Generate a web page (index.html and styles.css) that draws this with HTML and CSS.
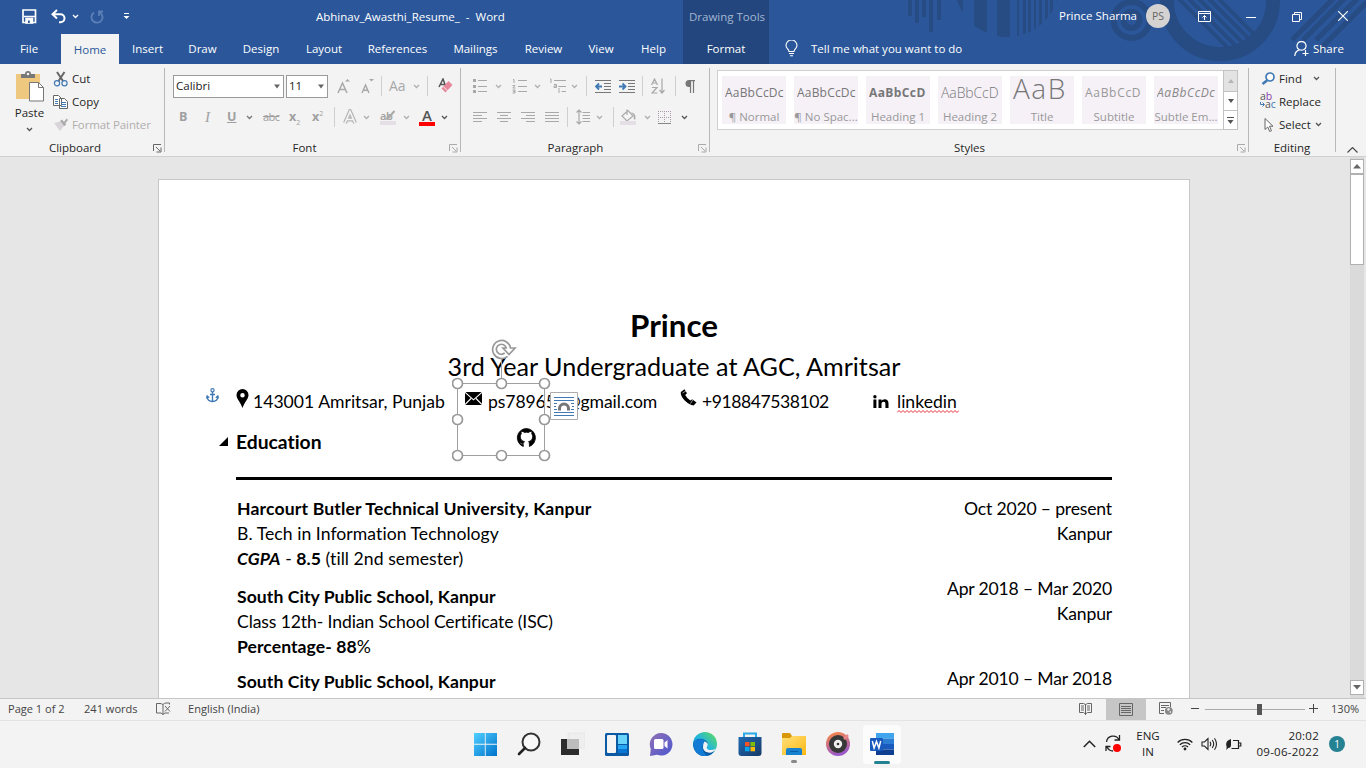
FILE: index.html
```html
<!DOCTYPE html>
<html lang="en">
<head>
<meta charset="utf-8">
<title>Abhinav_Awasthi_Resume_ - Word</title>
<link rel="stylesheet" href="styles.css">
</head>
<body>
<svg class="defs" width="0" height="0">
  <symbol id="chev" viewBox="0 0 7 5"><path d="M1 1l2.500 2.500L6 1" fill="none" stroke="currentColor" stroke-width="1.300"/></symbol>
  <symbol id="launch" viewBox="0 0 9 9"><path d="M.5 7V.5H8M3 3l4 4M8 3.500V8H3.500" fill="none" stroke="currentColor"/></symbol>
  <symbol id="tri" viewBox="0 0 8 5"><path d="M1 .5h6L4 4.500z" fill="currentColor"/></symbol>
</svg>

<header class="top">
  <svg class="decor" width="466" height="64" viewBox="900 0 466 64">
    <defs>
      <clipPath id="c1"><circle cx="1007" cy="-15" r="52"/></clipPath>
      <clipPath id="c2"><circle cx="1220" cy="1" r="47"/></clipPath>
    </defs>
    <g fill="#274b83">
      <path d="M908 0h4v16h-4zM915 0h4v23h-4zM922 0h4v17h-4zM929 0h4v32h-4zM937 0h4v20h-4z"/>
      <path clip-path="url(#c1)" d="M956 0h7v40h-7zM974 0h13v40h-13zM997 0h13v40h-13zM1017 0h2v40h-2zM1023 0h3v40h-3zM1028 0h3v40h-3zM1034 0h2v40h-2zM1039 0h3v40h-3zM1045 0h3v40h-3zM1050 0h3v40h-3zM1056 0h2v40h-2z"/>
    </g>
    <g fill="none" stroke="#274b83">
      <circle cx="1131.500" cy="20" r="18" stroke-width="6"/>
      <circle cx="1131.500" cy="20" r="8" stroke-width="6"/>
      <circle cx="1220" cy="1" r="53" stroke-width="14"/>
      <path clip-path="url(#c2)" stroke-width="4" d="M1160-20l80 80M1170-20l80 80M1180-20l80 80M1190-20l80 80M1200-20l80 80"/>
      <path stroke-width="5" d="M1292 40l45-45M1303 40l45-45M1316 40l45-45M1317 52l55-55"/>
    </g>
  </svg>
  <div class="titlebar">
    <svg width="15" height="15" viewBox="0 0 15 15"><path d="M1 1h12.500v12.500H1z" fill="none" stroke="#fff" stroke-width="1.700"/><path d="M2 7.500h11M4 9.500h6.500V14H4z" fill="#fff" stroke="#fff" stroke-width="1.500"/><path d="M6 11.500h1.800V14H6z" fill="#2b579a"/></svg>
    <svg width="15" height="15" viewBox="0 0 15 15"><path d="M6 1L1.500 5.200L6 9.500M2 5.200h7.500a4 4 0 0 1 0 8H8" fill="none" stroke="#fff" stroke-width="2"/></svg>
    <svg class="w" width="7" height="5"><use href="#chev"/></svg>
    <svg width="14" height="14" viewBox="0 0 14 14"><path d="M4 2.500a5.500 5.500 0 1 0 5-.5M9 6V1.500h4" fill="none" stroke="#5b7fb7" stroke-width="1.800"/></svg>
    <svg width="7" height="7" viewBox="0 0 7 7"><path d="M1 .5h5" stroke="#fff"/><path d="M.5 3h6L3.500 6z" fill="#fff"/></svg>
    <span class="doc-name">Abhinav_Awasthi_Resume_&nbsp; -&nbsp; Word</span>
    <span class="ctx">Drawing Tools</span>
    <span class="user">Prince Sharma</span>
    <span class="avatar">PS</span>
    <svg width="13" height="11" viewBox="0 0 13 11"><path d="M.5.500h12v10H.5zM.5 2.500h12M6.500 9V4.500M4.500 6.500l2-2l2 2" fill="none" stroke="#fff"/></svg>
    <svg width="10" height="10" viewBox="0 0 10 10"><path d="M0 5.500h10" stroke="#fff"/></svg>
    <svg width="10" height="10" viewBox="0 0 10 10"><path d="M.5 2.500h7v7h-7zM2.500 2V.5h7v7H8" fill="none" stroke="#fff"/></svg>
    <svg class="close" width="10" height="10" viewBox="0 0 10 10"><path d="M0 0l10 10M10 0L0 10" stroke="#fff" stroke-width="1.100"/></svg>
  </div>
  <nav class="tabs">
    <span>File</span><span class="on">Home</span><span>Insert</span><span>Draw</span><span>Design</span><span>Layout</span><span>References</span><span>Mailings</span><span>Review</span><span>View</span><span>Help</span><span class="fmt">Format</span>
    <svg class="bulb" width="13" height="17" viewBox="0 0 13 17"><path d="M4 11.500C4 9 1 8.500 1 5.500a5.200 5.200 0 0 1 11 0C12 8.500 9 9 9 11.500zM4 13.500h5M5 15.800h3" fill="none" stroke="#fff" stroke-width="1.100"/></svg>
    <span class="tell">Tell me what you want to do</span>
    <svg width="16" height="16" viewBox="0 0 16 16"><path d="M7.500.600a4.300 4.300 0 0 1 2 8.200M7.500.600a4.300 4.300 0 0 0-2 8.200M5.500 8.800Q1 10 .8 15M5.500 8.800q2 .8 4 0M11.500 9v6M8.500 12.500h6" fill="none" stroke="#fff" stroke-width="1.200"/></svg>
    <span class="share">Share</span>
  </nav>
</header>

<section class="ribbon">
  <div class="group clip">
    <div class="clip-body">
      <div class="paste">
        <svg width="29" height="32" viewBox="0 0 29 32"><path d="M1 4h24v25H1z" fill="#edc87e"/><path d="M6 8V4h4a3 3 0 0 1 6 0h4v4z" fill="#777"/><circle cx="13" cy="4" r="1.300" fill="#f3f3f3"/><path d="M14.500 12.500h9l5 5v13.500h-14z" fill="#fff" stroke="#777"/><path d="M23.500 12.500v5h5" fill="none" stroke="#777"/></svg>
        <span>Paste</span>
        <svg class="g" width="7" height="5"><use href="#chev"/></svg>
      </div>
      <div class="clip-list">
        <div><svg width="16" height="16" viewBox="0 0 16 16"><path d="M4 1l6 9M11.500 1l-6 9" stroke="#666" stroke-width="2"/><circle cx="4" cy="12.200" r="2.600" fill="none" stroke="#4179b5" stroke-width="1.200"/><circle cx="11.500" cy="12.200" r="2.600" fill="none" stroke="#4179b5" stroke-width="1.200"/></svg>Cut</div>
        <div><svg width="16" height="16" viewBox="0 0 16 16"><path d="M.5 1.500h5l3 3v7h-8zM6.500 4.500h5l3 3v7h-8z" fill="#fff" stroke="#666"/><path d="M2 5.500h3M2 7.500h3M2 9.500h3M8 8.500h5M8 10.500h5M8 12.500h5" stroke="#4179b5"/></svg>Copy</div>
        <div class="dis"><svg width="16" height="16" viewBox="0 0 16 16"><path d="M1 6l6-1.500L11 9l-4 5z" fill="#d9d4da"/><path d="M7 4l2-1.500L11 5l2.500-3.500L15 3l-2.500 3L13 8l-2 1z" fill="#aaa"/></svg>Format Painter</div>
      </div>
    </div>
    <div class="lab">Clipboard<svg width="9" height="9"><use href="#launch"/></svg></div>
  </div>

  <div class="group font">
    <div class="row f1">
      <div class="combo">Calibri<svg width="8" height="5"><use href="#tri"/></svg></div>
      <div class="combo">11<svg width="8" height="5"><use href="#tri"/></svg></div>
      <svg width="14" height="16" viewBox="0 0 14 16"><path d="M1 15L5.500 5L10 15M2.500 11.500h6" fill="none" stroke="#a8a8a8" stroke-width="1.500"/><path d="M8 3.500l2.500-2.500l2.500 2.500z" fill="#a8a8a8"/></svg>
      <svg width="14" height="16" viewBox="0 0 14 16"><path d="M1 15L4.500 7L8 15M2 12.300h5" fill="none" stroke="#a8a8a8" stroke-width="1.400"/><path d="M8 1h5l-2.500 2.500z" fill="#a8a8a8"/></svg>
      <i class="sep"></i>
      <span class="aa">Aa</span>
      <svg class="d" width="7" height="5"><use href="#chev"/></svg>
      <i class="sep"></i>
      <svg width="16" height="16" viewBox="0 0 16 16"><path d="M1 9l4-8l3 8M2.500 6.500h4" fill="none" stroke="#555" stroke-width="1.500"/><path d="M10.500 3l4 4l-7 7.500l-4-4z" fill="#e8879a"/><path d="M5.500 8.800l4 4" stroke="#f3f3f3"/></svg>
    </div>
    <div class="row f2">
      <b>B</b><em>I</em><b class="un">U</b><svg class="m" width="7" height="5"><use href="#chev"/></svg><s>abc</s><b>x<sub>2</sub></b><b>x<sup>2</sup></b><i class="sep"></i>
      <svg width="14" height="16" viewBox="0 0 14 16"><path d="M2 14L7 2.500L12 14M4 10.500h6" fill="none" stroke="#b5b5b5" stroke-width="4"/><path d="M2 14L7 2.500L12 14M4 10.500h6" fill="none" stroke="#f5f5f5" stroke-width="1.600"/></svg>
      <svg class="d" width="7" height="5"><use href="#chev"/></svg>
      <span class="hl">ab<svg width="16" height="16" viewBox="0 0 16 16"><path d="M14.500 2L9 8" stroke="#aaa" stroke-width="2"/><path d="M8 6l2.500 3L5 11z" fill="#aaa"/><path d="M0 12h16v4H0z" fill="#e4dfe5"/></svg></span>
      <svg class="d" width="7" height="5"><use href="#chev"/></svg>
      <span class="fc">A</span>
      <svg class="g" width="7" height="5"><use href="#chev"/></svg>
    </div>
    <div class="lab dl">Font<svg width="9" height="9"><use href="#launch"/></svg></div>
  </div>

  <div class="group para">
    <div class="row p1">
      <svg width="14" height="16" viewBox="0 0 14 16"><path d="M0 2.500h3M0 8.500h3M0 13.500h3" stroke="#a8a8a8" stroke-width="3"/><path d="M5 2.500h9M5 8.500h9M5 13.500h9" stroke="#a8a8a8"/></svg>
      <svg class="d" width="7" height="5"><use href="#chev"/></svg>
      <svg width="15" height="16" viewBox="0 0 15 16"><path d="M1 1.500h1V5M.5 7.500H3L.8 10H3.500M.5 12H3v3H.5M1 13.500h2" fill="none" stroke="#a8a8a8"/><path d="M6 2.500h9M6 8.500h9M6 13.500h9" stroke="#a8a8a8"/></svg>
      <svg class="d" width="7" height="5"><use href="#chev"/></svg>
      <svg width="17" height="16" viewBox="0 0 17 16"><path d="M1 1h1v4M5 6.500h2.500v3H5V8h2M10 10v5M10 8v1" fill="none" stroke="#a8a8a8"/><path d="M5 2.500h12M9.500 8.500H17M12.500 13.500H17" stroke="#a8a8a8"/></svg>
      <svg class="d" width="7" height="5"><use href="#chev"/></svg>
      <i class="sep"></i>
      <svg width="16" height="13" viewBox="0 0 16 13"><path d="M0 .5h16M9 3.500h7M9 6.500h7M9 9.500h7M0 12.500h16" stroke="#777"/><path d="M7 6.500H1M4 3.500l-3 3l3 3" fill="none" stroke="#4179b5" stroke-width="1.800"/></svg>
      <svg width="16" height="13" viewBox="0 0 16 13"><path d="M0 .5h16M9 3.500h7M9 6.500h7M9 9.500h7M0 12.500h16" stroke="#777"/><path d="M0 6.500h6M3.500 3.500l3 3l-3 3" fill="none" stroke="#4179b5" stroke-width="1.800"/></svg>
      <i class="sep"></i>
      <svg width="14" height="16" viewBox="0 0 14 16"><path d="M.5 7L3.500 1l3 6M1.500 5h4M1 9.500h5l-5 5.500h5.500M11 .5v14M8.500 12l2.500 3l2.500-3" fill="none" stroke="#a8a8a8" stroke-width="1.200"/></svg>
      <i class="sep"></i>
      <svg width="10" height="13" viewBox="0 0 10 13"><path d="M5.500 0v7H4A3.500 3.500 0 0 1 4 0z" fill="#777"/><path d="M4 .6h6M5.500 0v13M8.500 0v13" stroke="#777" stroke-width="1.200"/></svg>
    </div>
    <div class="row p2">
      <svg width="14" height="11" viewBox="0 0 14 11"><path d="M0 .5h14M0 3.500h9M0 6.500h14M0 9.500h9" stroke="#a8a8a8"/></svg>
      <svg width="14" height="11" viewBox="0 0 14 11"><path d="M0 .5h14M3 3.500h8M0 6.500h14M3 9.500h8" stroke="#a8a8a8"/></svg>
      <svg width="14" height="11" viewBox="0 0 14 11"><path d="M0 .5h14M5 3.500h9M0 6.500h14M5 9.500h9" stroke="#a8a8a8"/></svg>
      <svg width="14" height="11" viewBox="0 0 14 11"><path d="M0 .5h14M0 3.500h14M0 6.500h14M0 9.500h14" stroke="#a8a8a8"/></svg>
      <i class="sep"></i>
      <svg width="15" height="16" viewBox="0 0 15 16"><path d="M3 1v14M.5 3.500L3 1l2.500 2.500M.5 12.500L3 15l2.500-2.500M6.500 3.500H14M6.500 6.500H14M6.500 9.500H14M6.500 12.500H14" fill="none" stroke="#a8a8a8" stroke-width="1.200"/></svg>
      <svg class="d" width="7" height="5"><use href="#chev"/></svg>
      <i class="sep"></i>
      <svg width="16" height="16" viewBox="0 0 16 16"><path d="M2 7l6-5.500L13 7l-6 5zM7 6V.500" fill="#f6f6f6" stroke="#aaa" stroke-width="1.200"/><path d="M11 3q6 2 4 8q-2-1-1-4z" fill="#aaa"/><path d="M0 12h16v4H0z" fill="#e4dfe5"/></svg>
      <svg class="d" width="7" height="5"><use href="#chev"/></svg>
      <svg width="13" height="13" viewBox="0 0 13 13"><path d="M.5 0v12M12.500 0v12M6.500 0v12M0 .5h13M0 6.500h13" stroke="#a99aa9" stroke-dasharray="1 1"/><path d="M0 12.500h13" stroke="#888"/></svg>
      <svg class="g" width="7" height="5"><use href="#chev"/></svg>
    </div>
    <div class="lab dl">Paragraph<svg width="9" height="9"><use href="#launch"/></svg></div>
  </div>

  <div class="group styles">
    <div class="gallery">
      <div class="st"><p>AaBbCcDc</p><span>¶ Normal</span></div>
      <div class="st"><p>AaBbCcDc</p><span>¶ No Spac...</span></div>
      <div class="st h1"><p>AaBbCcD</p><span>Heading 1</span></div>
      <div class="st h2"><p>AaBbCcD</p><span>Heading 2</span></div>
      <div class="st ti"><p>AaB</p><span>Title</span></div>
      <div class="st su"><p>AaBbCcD</p><span>Subtitle</span></div>
      <div class="st se"><p>AaBbCcDc</p><span>Subtle Em...</span></div>
      <div class="gbtns">
        <span class="off"><svg width="6" height="4" viewBox="0 0 6 4"><path d="M0 4h6L3 0z" fill="#b5b5b5"/></svg></span>
        <span><svg width="6" height="4" viewBox="0 0 6 4"><path d="M0 0h6L3 4z" fill="#555"/></svg></span>
        <span><svg width="7" height="7" viewBox="0 0 7 7"><path d="M0 .5h7" stroke="#555"/><path d="M.5 3h6l-3 4z" fill="#555"/></svg></span>
      </div>
    </div>
    <div class="lab dl">Styles<svg width="9" height="9"><use href="#launch"/></svg></div>
  </div>

  <div class="group edit">
    <div class="edit-list">
      <div><svg width="16" height="16" viewBox="0 0 16 16"><circle cx="10" cy="6" r="4" fill="#fff" stroke="#4179b5" stroke-width="1.700"/><path d="M7 9.500L2.500 13" stroke="#4179b5" stroke-width="2.600"/></svg><span>Find</span><svg class="g far" width="7" height="5"><use href="#chev"/></svg></div>
      <div><span class="rep"><span>a<u>b</u></span><span class="r2"><svg width="5" height="5" viewBox="0 0 5 5"><path d="M.5 0v2.500H4M2.500.500l2 2l-2 2" fill="none" stroke="#4179b5"/></svg>a<u>c</u></span></span><span>Replace</span></div>
      <div><svg width="16" height="16" viewBox="0 0 16 16"><path d="M5 1.500v11l2.700-2.500l2 4.500l1.800-.8l-2-4.500H13z" fill="#fff" stroke="#666"/></svg><span>Select</span><svg class="g near" width="7" height="5"><use href="#chev"/></svg></div>
    </div>
    <div class="lab">Editing</div>
  </div>
  <div class="collapse"><svg width="11" height="6" viewBox="0 0 11 6"><path d="M.5 5.500l5-5l5 5" fill="none" stroke="#444" stroke-width="1.100"/></svg></div>
</section>

<main class="work">
  <article class="page">
    <h1>Prince</h1>
    <h2>3rd Year Undergraduate at AGC, Amritsar</h2>
    <div class="contact">
      <svg width="13" height="19" viewBox="0 0 13 19"><path d="M6.500 0A6 6 0 0 1 12.500 6c0 4-4 7-6 13C4.500 13 .5 10 .5 6a6 6 0 0 1 6-6zm0 4a2.200 2.200 0 1 0 0 4.500a2.200 2.200 0 0 0 0-4.500z" fill-rule="evenodd"/></svg>
      <span class="t addr">143001 Amritsar, Punjab</span>
      <svg class="env" width="17" height="13" viewBox="0 0 17 13"><path d="M0 0h17v13H0z"/><path d="M0 .3l8.500 7.500L17 .3M0 12.500l6-6M17 12.500l-6-6" fill="none" stroke="#fff" stroke-width="1.100"/></svg>
      <span class="t mail">ps789654@gmail.com</span>
      <svg class="ph" width="17" height="17" viewBox="0 0 17 17"><path d="M.8 3L4.500.200l2.500 4L5.200 6Q7 9.500 10.300 11.500l2-1.200l4.200 3.200l-3 3Q9.500 16 4.700 11.500Q.3 7 .8 3z"/><path d="M2.500 4l4.200-2.500M10.500 14.500l3.200-5" stroke="#fff" stroke-width=".6"/></svg>
      <span class="t tel">+918847538102</span>
      <svg class="li" width="16" height="13" viewBox="0 0 16 13"><circle cx="1.900" cy="1.700" r="1.700"/><path d="M.4 4.500h3V13h-3zM5.500 4.500h3v1.200Q9.500 4.200 11.500 4.200c3 0 4 1.600 4 4.500V13h-3.100V9c0-1.300-.4-2.200-1.700-2.200S8.500 7.700 8.500 9v4h-3z"/></svg>
      <span class="t lnk">linkedin<svg width="62" height="3" viewBox="0 0 62 3"><path d="M0 2.500l2-2l2 2l2-2l2 2l2-2l2 2l2-2l2 2l2-2l2 2l2-2l2 2l2-2l2 2l2-2l2 2l2-2l2 2l2-2l2 2l2-2l2 2l2-2l2 2l2-2l2 2l2-2l2 2l2-2l2 2l2-2" fill="none" stroke="#e8303a"/></svg></span>
    </div>
    <h3><svg width="9" height="9" viewBox="0 0 9 9"><path d="M9 0v9H0z"/></svg>Education</h3>
    <div class="cols">
      <div class="left">
        <p class="uni"><b>Harcourt Butler Technical University, Kanpur</b></p>
        <p>B. Tech in Information Technology</p>
        <p><b><em>CGPA</em></b> - <b>8.5</b> (till 2nd semester)</p>
        <p class="gap1"><b>South City Public School, Kanpur</b></p>
        <p class="cls">Class 12th- Indian School Certificate (ISC)</p>
        <p><b>Percentage- 88</b>%</p>
        <p class="gap2"><b>South City Public School, Kanpur</b></p>
      </div>
      <div class="right">
        <p>Oct 2020 – present</p>
        <p>Kanpur</p>
        <p class="gap3">Apr 2018 – Mar 2020</p>
        <p>Kanpur</p>
        <p class="gap4">Apr 2010 – Mar 2018</p>
      </div>
    </div>
    <svg class="anchor" width="13" height="15" viewBox="0 0 13 15"><path d="M6.500 4v10M4 6.500h5M1 8.500Q1.500 13.500 6.500 13.500T12 8.500M.5 10.500l.7-2.500l2 1.700M12.500 10.500L11.800 8l-2 1.700" fill="none" stroke="#4179b5" stroke-width="1.400"/><circle cx="6.500" cy="2.300" r="1.600" fill="none" stroke="#4179b5" stroke-width="1.200"/></svg>
    <svg class="selection" width="102" height="126" viewBox="0 0 102 126">
      <g transform="translate(-452 -337)">
      <path d="M457.500 383.500h87v72h-87zM501.500 383v-24" fill="none" stroke="#a0a0a0"/>
      <g fill="#fff" stroke="#999" stroke-width="1.700"><circle cx="457.500" cy="383.500" r="5"/><circle cx="501.500" cy="383.500" r="5"/><circle cx="544.500" cy="383.500" r="5"/><circle cx="457.500" cy="419.500" r="5"/><circle cx="544.500" cy="419.500" r="5"/><circle cx="457.500" cy="455.500" r="5"/><circle cx="501.500" cy="455.500" r="5"/><circle cx="544.500" cy="455.500" r="5"/></g>
      <path d="M507.500 356.300A9 9 0 1 1 510.500 348h4.500l-6 6.500l-6-6.500h3.200a5 5 0 1 0-1.500 5" fill="#fff" stroke="#999" stroke-width="1.700"/>
      <path d="M526.500 428.500a9.300 9.300 0 0 0-3.200 18v-2c-2.800.4-3-1.700-4-2.200c1.500-.5 2 2 4.200 1c.1-1 .5-1.300 1-1.700c-4.500-.8-5-6-3.200-7.700c-.3-1-.2-2 .2-2.700c1.300.1 2.200.7 2.800 1.300a9 9 0 0 1 4.400 0c.6-.6 1.600-1.200 2.800-1.300c.4.800.5 1.700.2 2.700c1.800 1.700 1.300 6.900-3.200 7.700c.7.600.9 1.300.9 2.500v2.400a9.300 9.300 0 0 0-2.900-18z" stroke="#000" stroke-width=".8"/>
      </g>
    </svg>
    <svg class="layout-opt" width="28" height="28" viewBox="0 0 28 28"><path d="M.5.500h27v27H.5z" fill="#fff" stroke="#ababab"/><path d="M4 5.500h20M4 8.500h20M4 20.500h20M4 23.500h20M4 11.500h3M21 11.500h3M4 14.500h2M22 14.500h2M4 17.500h3M21 17.500h3" stroke="#4179b5"/><path d="M9.500 18.500v-2a4.500 4.500 0 0 1 9 0v2" fill="none" stroke="#777" stroke-width="3"/></svg>
  </article>
  <aside class="scroll">
    <span class="sb"><svg width="8" height="5" viewBox="0 0 8 5"><path d="M0 4.500h8L4 0z" fill="#666"/></svg></span>
    <span class="thumb"></span>
    <span class="sb end"><svg width="8" height="5" viewBox="0 0 8 5"><path d="M0 0h8L4 4.500z" fill="#666"/></svg></span>
  </aside>
</main>

<div class="status">
  <span>Page 1 of 2</span><span>241 words</span>
  <svg width="15" height="14" viewBox="0 0 15 14"><path d="M7 2.500Q5.500 1.500 4 1.500H.5v9.500H5L7 12.500L9 11h4M7 2.500v10M7 2.500Q8.500 1 10 1h3.500v1.500M9 4l5 5.500M14 4L9 9.500" fill="none" stroke="#666"/></svg>
  <span>English (India)</span>
  <svg width="13" height="13" viewBox="0 0 13 13"><path d="M.5 1.500h4l2 1l2-1h4v9h-4l-2 1.500l-2-1.500h-4zM6.500 2v11M2 4h3M2 6h3M2 8h3M8 4h3M8 6h3M8 8h3" fill="none" stroke="#666"/></svg>
  <span class="act"><svg width="14" height="13" viewBox="0 0 14 13"><path d="M.5.500h13v12H.5zM2 3.500h10M2 5.500h10M2 7.500h10M2 9.500h10" fill="none" stroke="#666"/></svg></span>
  <svg width="14" height="13" viewBox="0 0 14 13"><path d="M5 11.500H.5V.5h11V5M2 3.500h8M2 5.500h5M2 8.500h3" fill="none" stroke="#666"/><circle cx="9.800" cy="8.800" r="3.900" fill="#888"/><path d="M8 7l2-1l1 1.500L9 9zM10 10l2-1v2z" fill="#f3f3f3"/></svg>
  <svg width="8" height="9" viewBox="0 0 8 9"><path d="M0 4.500h8" stroke="#444"/></svg>
  <span class="zoom"><i></i></span>
  <svg width="9" height="9" viewBox="0 0 9 9"><path d="M0 4.500h9M4.500 0v9" stroke="#444"/></svg>
  <span class="pct">130%</span>
</div>

<footer class="taskbar">
  <div class="apps">
    <svg viewBox="0 0 24 24"><defs><linearGradient id="w" x1="0" y1="0" x2="1" y2="1"><stop offset="0" stop-color="#4fd0ff"/><stop offset="1" stop-color="#0072cc"/></linearGradient><linearGradient id="e" x1="0" y1="1" x2="1" y2="0"><stop offset="0" stop-color="#0c7bd8"/><stop offset=".5" stop-color="#25b6dc"/><stop offset="1" stop-color="#63e052"/></linearGradient><linearGradient id="p" x1="0" y1="0" x2="1" y2="1"><stop offset="0" stop-color="#9170b5"/><stop offset="1" stop-color="#4b57cf"/></linearGradient><linearGradient id="o" x1="0" y1="0" x2=".3" y2="1"><stop offset="0" stop-color="#ff8a3c"/><stop offset="1" stop-color="#9a59c9"/></linearGradient><linearGradient id="y" x1="0" y1="0" x2="1" y2="1"><stop offset="0" stop-color="#ffe07a"/><stop offset="1" stop-color="#fbb812"/></linearGradient><linearGradient id="s" x1="0" y1="0" x2="1" y2="1"><stop offset="0" stop-color="#1f6bb5"/><stop offset="1" stop-color="#183a66"/></linearGradient></defs><path fill="url(#w)" d="M1 1h10.800v10.800H1zM12.700 1H24v10.800H12.700zM1 12.700h10.800V24H1zM12.700 12.700H24V24H12.700z"/></svg>
    <svg viewBox="0 0 24 24"><circle cx="14" cy="10" r="8.500" fill="#f8f8f8" stroke="#333" stroke-width="2"/><path d="M8 16l-6 6" stroke="#222" stroke-width="2.600" stroke-linecap="round"/></svg>
    <svg viewBox="0 0 24 24"><path d="M7 1h17v15H7z" fill="#eee" stroke="#ddd" stroke-width=".5"/><path d="M0 7h18v16H0z" fill="#2c2c2c"/><path d="M6 7h12v10H6z" fill="#bdbdbd"/></svg>
    <svg viewBox="0 0 24 24"><rect width="24" height="23" y="1" rx="1.500" fill="#0c59a4"/><rect x="2" y="3" width="9" height="18" rx="1" fill="#f5f5f5"/><path d="M13 3h9v9h-9z" fill="#69d3fa"/><path d="M13 13h9v4h-9z" fill="#26a5f5"/><path d="M13 17h9v4h-9z" fill="#0877d4"/></svg>
    <svg viewBox="0 0 24 24"><path d="M12 1a11.300 11.300 0 1 1-4 21.800L1 24l.8-7A11.300 11.300 0 0 1 12 1z" fill="url(#p)"/><rect x="5" y="7" width="9.500" height="10" rx="1.500" fill="#fff"/><path d="M15.500 10.500L18.500 8v8.500l-3-2.500z" fill="#fff"/></svg>
    <svg viewBox="0 0 24 24"><circle cx="12" cy="12" r="12" fill="url(#e)"/><path d="M0 12q3-6 9-5q5 1 6 5q-5-2-5 3q1 5 7 5q3 0 5-2Q18 25 10 24Q1 22 0 12z" fill="#0c59a4"/><path d="M0 12q2-5 7-5q5 0 6 3q-5 2-3 8q1 4 5 5.700Q2 26 0 12z" fill="#137bd3"/><path d="M11.500 9.500q4 1 3 4q-2 3 1 4.300q4 1 8-1.600q-2 3.500-5 4.300q-7 1-8.500-4.500q-.5-4 1.500-6.500z" fill="#f3f3f3"/></svg>
    <svg viewBox="0 0 24 24"><path d="M6 6V1.500h12V6" fill="none" stroke="#2aaae8" stroke-width="2"/><path d="M.5 5h23v16q0 3-3 3h-17q-3 0-3-3z" fill="url(#s)"/><path d="M7 10h4.500v4.300H7z" fill="#f35325"/><path d="M12.500 10H17v4.300h-4.500z" fill="#81bc06"/><path d="M7 15h4.500v4.300H7z" fill="#05a6f0"/><path d="M12.500 15H17v4.300h-4.500z" fill="#ffba08"/></svg>
    <span class="run"><svg viewBox="0 0 24 24"><path d="M0 2q0-1 1-1h7l2 3v3H0z" fill="#d9980a"/><path d="M0 6h8l2-2h14v19H0z" fill="url(#y)"/><path d="M4 23v-5q0-2 2-2h12q2 0 2 2v5z" fill="#1681cf"/><path d="M8 19.500h8" stroke="#0a5ca5"/></svg><i></i></span>
    <svg viewBox="0 0 24 24"><circle cx="12" cy="12" r="12" fill="url(#o)"/><circle cx="12" cy="12" r="9" fill="#383838"/><circle cx="12" cy="12" r="4.200" fill="#f0f0f0"/><circle cx="12" cy="12" r="1.300" fill="#333"/><path d="M18 7l4-4" stroke="#e98888" stroke-width="2.500"/></svg>
    <span class="run word"><svg viewBox="0 0 24 24"><path d="M6 1h18v5.500H6z" fill="#41a5ee"/><path d="M6 6.500h18V12H6z" fill="#2b7cd3"/><path d="M6 12h18v5.500H6z" fill="#185abd"/><path d="M6 17.500h18V23H6z" fill="#103f91"/><rect x="0" y="6" width="13" height="13" rx="1" fill="#185abd"/><path d="M2.300 9l1.800 7l2.400-6.500l2.400 6.500l1.800-7" fill="none" stroke="#fff" stroke-width="1.500"/></svg><i></i></span>
  </div>
  <div class="tray">
    <svg width="13" height="8" viewBox="0 0 13 8"><path d="M.8 7l5.700-5.700L12.200 7" fill="none" stroke="#222" stroke-width="1.500"/></svg>
    <svg width="17" height="18" viewBox="0 0 17 18"><path d="M1.500 7A6.700 6.700 0 0 1 14 4.500M14.500 0v5h-5M1 16v-4.500h4.500M2 12q2 4 6 4" fill="none" stroke="#222" stroke-width="1.300"/><circle cx="12" cy="13" r="4" fill="#f00"/></svg>
    <span class="lang">ENG<br>IN</span>
    <svg width="16" height="13" viewBox="0 0 16 13"><path d="M.6 4.500a10.500 10.500 0 0 1 14.800 0M2.800 6.800a7.400 7.400 0 0 1 10.400 0M5 9a4.300 4.300 0 0 1 6 0" fill="none" stroke="#222" stroke-width="1.200"/><circle cx="8" cy="11" r="1.400" fill="#222"/></svg>
    <svg width="17" height="14" viewBox="0 0 17 14"><path d="M1 5h2.500L7 1.500v11L3.500 9H1zM9 4.800q1.500 2.200 0 4.400M11.200 3q3 4 0 8M13.500 1.200q4 5.800 0 11.600" fill="none" stroke="#222" stroke-width="1.100"/></svg>
    <svg width="17" height="13" viewBox="0 0 17 13"><path d="M8 2.500h5.500v8H6.500M14 5h1.800v3H14" fill="none" stroke="#222" stroke-width="1.200"/><path d="M6 1v6q0 3-2.800 3l-2 2l.5-3Q-.5 3 6 1z" fill="#222"/></svg>
    <span class="clock">20:02<br>09-06-2022</span>
    <span class="badge">1</span>
  </div>
</footer>
</body>
</html>
```
FILE: styles.css
```css
* { box-sizing: border-box; }
body { margin: 0; width: 1366px; height: 768px; overflow: hidden; display: flex; flex-direction: column; background: #f3f3f3; font: 11.5px/16px "Open Sans", "Noto Sans", sans-serif; color: #262626; white-space: nowrap; }
h1, h2, h3, p { margin: 0; }
svg { display: block; flex: none; }
.defs { position: absolute; }
.w { color: #fff; } .g { color: #555; } .m { color: #777; } .d { color: #b0b0b0; }

.top { position: relative; height: 64px; background: #2b579a; color: #fff; }
.decor { position: absolute; right: 0; top: 0; }
.titlebar, .tabs { position: relative; display: grid; align-items: center; }
.titlebar { height: 33px; padding-left: 22px; grid-template-columns: 29px 21px 18px 33px 193px 367px 376px 87px 52px 48px 46px 46px 1fr; }
.ctx { background: #22467d; color: #a4b7d3; height: 33px; line-height: 33px; width: 86px; text-align: center; padding-left: 2px; }
.close { margin-top: -2px; }
.avatar { width: 24px; height: 24px; border-radius: 50%; background: #d5d3d2; color: #666; font-size: 10.5px; line-height: 24px; text-align: center; margin-top: -2px; }
.user { margin-top: -1px; }
.tabs { height: 31px; grid-template-columns: 58px 61px 57px 53px 64px 62px 85px 71px 65px 50px 55px 88px 42px 483px 19px 1fr; }
.tabs span { height: 31px; line-height: 32px; text-align: center; }
.tabs span:first-child { line-height: 31px; }
.tabs .on { background: #f3f3f3; color: #2b579a; margin: 1px 0 0 3px; height: 30px; line-height: 31px; }
.tabs .fmt { background: #22467d; margin-left: 2px; }
.bulb { margin-left: 16px; }
.tabs .tell, .tabs .share { text-align: left; line-height: 31px; }

.ribbon { height: 93px; display: flex; border-bottom: 1px solid #d2d0ce; background: #f3f3f3; }
.group { margin: 4px 0; height: 84px; border-right: 1px solid #b8b8b8; display: flex; flex-direction: column; position: relative; }
.clip { width: 165px; } .font { width: 296px; } .para { width: 249px; } .styles { width: 539px; } .edit { width: 87px; }
.lab { margin: auto 0 -4px -8px; height: 16px; text-align: center; display: grid; grid-template-columns: 1fr 9px; align-items: center; padding: 0 2px 0 0; }
.clip .lab { margin-left: -3px; padding-right: 2px; }
.font .lab { margin-left: -5px; }
.lab svg { color: #666; } .dl svg { color: #aaa; }
.edit .lab { padding: 0; margin-left: 0; display: block; }
.clip-body { display: flex; }
.paste { width: 54px; padding: 2px 0 0 5px; display: flex; flex-direction: column; align-items: center; gap: 4px; }
.paste span { line-height: 14px; } .paste svg:last-child { margin-top: 3px; }
.clip-list { margin-top: -1px; }
.clip-list div { height: 23px; display: flex; align-items: center; gap: 3px; }
.clip-list .dis { color: #b0aeae; letter-spacing: -.1px; }
.clip-list svg { margin-left: -1px; }
.row { display: grid; align-items: center; height: 31px; }
.f1 { height: 36px; padding-left: 8px; grid-template-columns: 113px 44px 25px 26px 8px 24px 14px 11px 1fr; }
.combo { height: 23px; border: 1px solid #9a9a9a; background: #fff; display: flex; align-items: center; justify-content: space-between; padding: 0 2px; color: #222; width: 111px; }
.combo + .combo { width: 42px; }
.f1 > svg:nth-child(3) { margin-left: 7px; } .f1 > svg:nth-child(4) { margin-left: 6px; }
.combo svg { color: #666; }
.sep { width: 1px; height: 20px; background: #cfcfcf; }
.aa { color: #a8a8a8; font-size: 14px; }
.f2 { height: 26px; color: #a0a0a0; padding-left: 14px; grid-template-columns: 24px 24px 19px 17px 26px 23px 22px 9px 20px 17px 23px 16px 22px 1fr; font-size: 12.500px; }
.f2 em { font-family: "Liberation Serif", serif; font-size: 15px; padding-left: 2px; }
.un { text-decoration: underline; } .f2 s { font-size: 11px; letter-spacing: -.6px; }
.f2 sub, .f2 sup { font-size: 7px; line-height: 0; font-weight: 400; }
.hl { position: relative; font-size: 11px; line-height: 14px; height: 16px; letter-spacing: -.5px; font-weight: 600; }
.hl svg { position: absolute; left: 0; top: 0; }
.fc { width: 16px; height: 17px; border-bottom: 4px solid #f00; color: #555; font-weight: 600; font-size: 15px; line-height: 13px; text-align: center; }
.p1 { height: 36px; padding-left: 12px; grid-template-columns: 22px 17px 22px 15px 22px 15px 9px 24px 23px 9px 24px 10px 1fr; }
.p2 { height: 26px; padding-left: 12px; grid-template-columns: 24px 24px 24px 22px 9px 20px 17px 7px 24px 14px 23px 1fr; }
.gallery { margin: 2px 0 0 7px; width: 521px; height: 60px; border: 1px solid #cfcfcf; background: #fff; display: flex; gap: 8px; padding: 5px 0 0 4px; position: relative; }
.st { width: 64px; height: 48px; background: #f5f1f7; text-align: center; color: #999; flex: none; padding: 3px; }
.st p { font-size: 12px; letter-spacing: .2px; line-height: 27px; height: 27px; overflow: hidden; text-align: left; color: #777; width: 59px; }
.st span { display: block; line-height: 16px; margin: 3px -4px 0; font-size: 11.5px; }
.h1 p { font-weight: 700; letter-spacing: .4px; } .st.h2 p { font-weight: 300; font-size: 14px; letter-spacing: -.1px; } .st.su p { letter-spacing: .7px; color: #999; } .st.se p { font-style: italic; color: #888; letter-spacing: .6px; }
.st.ti p { font-size: 28px; font-weight: 300; line-height: 19px; letter-spacing: 1.500px; }
.gbtns { position: absolute; right: -1px; top: -1px; width: 15px; height: 60px; display: grid; grid-template-rows: 21px 19px 20px; }
.gbtns span { border: 1px solid #c2c2c2; border-bottom: 0; display: grid; place-items: center; background: #fff; margin: 0; }
.gbtns span:last-child { border-bottom: 1px solid #c2c2c2; } .gbtns .off { background: #e3e3e3; }
.edit-list { margin-top: -1px; }
.edit-list div { height: 23px; display: flex; align-items: center; gap: 3px; padding-left: 11px; }
.far { margin-left: 8px; } .near { margin-left: 1px; }
.rep { width: 16px; line-height: 8px; font-size: 10.500px; height: 16px; margin-top: -3px; display: flex; flex-direction: column; color: #555; }
.rep u { text-decoration: none; color: #8a3fb0; } .rep .r2 { display: flex; align-items: center; } .r2 u { color: #4179b5; }
.collapse { padding: 83px 0 0 11px; }

.work { height: 541px; background: #e6e6e6; position: relative; display: flex; justify-content: space-between; align-items: flex-start; overflow: hidden; }
.page { position: relative; margin: 22px 0 0 158px; width: 1032px; height: 600px; background: #fff; border: 1px solid #c6c6c6; padding: 124px 77px 0; color: #000; font: 17.600px/25px Lato, sans-serif; font-variant-ligatures: none; }
.page h1 { font-size: 31.300px; line-height: 43px; height: 45px; text-align: center; }
.page h2 { font-size: 25.150px; line-height: 34px; font-weight: 400; text-align: center; }
.contact { display: flex; height: 36px; }
.contact svg { margin-top: 6px; } .contact .t { line-height: 38px; position: relative; }
.addr { width: 216px; padding-left: 4px; } .mail { width: 198px; padding-left: 6px; letter-spacing: -.1px; } .tel { width: 176px; padding-left: 5px; letter-spacing: -.45px; }
.lnk { padding-left: 8px; } .lnk svg { position: absolute; left: 8px; top: 21px; }
.contact .li { margin-top: 12px; } .contact .env { margin-top: 9px; }
.page h3 { display: flex; font-size: 19.300px; line-height: 46px; height: 61px; border-bottom: 3px solid #000; }
.page h3 svg { margin: 18px 8px 0 -17px; }
.cols { display: flex; justify-content: space-between; padding: 16px 0 0 1px; }
.left { letter-spacing: .05px; } .uni { letter-spacing: .15px; } .cls { letter-spacing: -.12px; }
.right { text-align: right; letter-spacing: -.18px; }
.gap1 { margin-top: 13px; } .gap2 { margin-top: 10px; } .gap3 { margin-top: 30px; } .gap4 { margin-top: 40px; }
.anchor { position: absolute; left: 47px; top: 208px; }
.selection { position: absolute; left: 293px; top: 157px; }
.layout-opt { position: absolute; left: 391px; top: 212px; }
.scroll { width: 17px; height: 541px; padding: 2px 2px 3px 1px; background: linear-gradient(90deg, #e6e6e6 1px, #dadada 1px 15px, #e6e6e6 15px); display: flex; flex-direction: column; }
.sb { height: 15px; border: 1px solid #b0b0b0; background: #fff; display: grid; place-items: center; }
.thumb { height: 91px; border: 1px solid #b0b0b0; background: #fff; } .end { margin-top: auto; }

.status { height: 23px; border-top: 1px solid #c6c6c6; border-bottom: 1px solid #e3e3e3; display: grid; align-items: center; padding-left: 8px; grid-template-columns: 76px 72px 32px 891px 27px 53px 32px 14px 104px 22px 1fr; font-size: 11.050px; color: #444; line-height: 19px; }
.status > span:not(.act):not(.zoom), .status > svg { margin-top: -2px; }
.act { width: 40px; height: 21px; background: #c6c6c6; display: grid; place-items: center; }
.zoom { width: 100px; height: 1px; background: #aaa; } .zoom i { display: block; width: 5px; height: 11px; background: #555; margin: -5px 0 0 52px; }
.taskbar { height: 47px; display: flex; justify-content: space-between; padding-left: 473px; }
.apps { display: flex; align-items: center; gap: 20.100px; height: 46px; }
.apps > svg, .apps .run svg { width: 24px; height: 24px; }
.run { position: relative; } .run i { position: absolute; bottom: -7px; left: 9px; width: 6px; height: 3px; border-radius: 2px; background: #888; }
.word { padding: 7px 7px 8px 7px; margin: 0 -7px; border-radius: 4px; background: #fcfcfc; } .word i { left: 11px; bottom: 0; width: 16px; background: #258292; }
.tray { width: 283px; height: 46px; display: grid; align-items: center; grid-template-columns: 22px 26px 46px 24px 24px 27px 77px 1fr; color: #222; line-height: 16px; }
.lang { text-align: center; width: 34px; } .clock { text-align: right; width: 67px; letter-spacing: .25px; }
.badge { width: 16px; height: 16px; border-radius: 50%; background: #258292; color: #fff; text-align: center; font-size: 10px; line-height: 16px; }
```
